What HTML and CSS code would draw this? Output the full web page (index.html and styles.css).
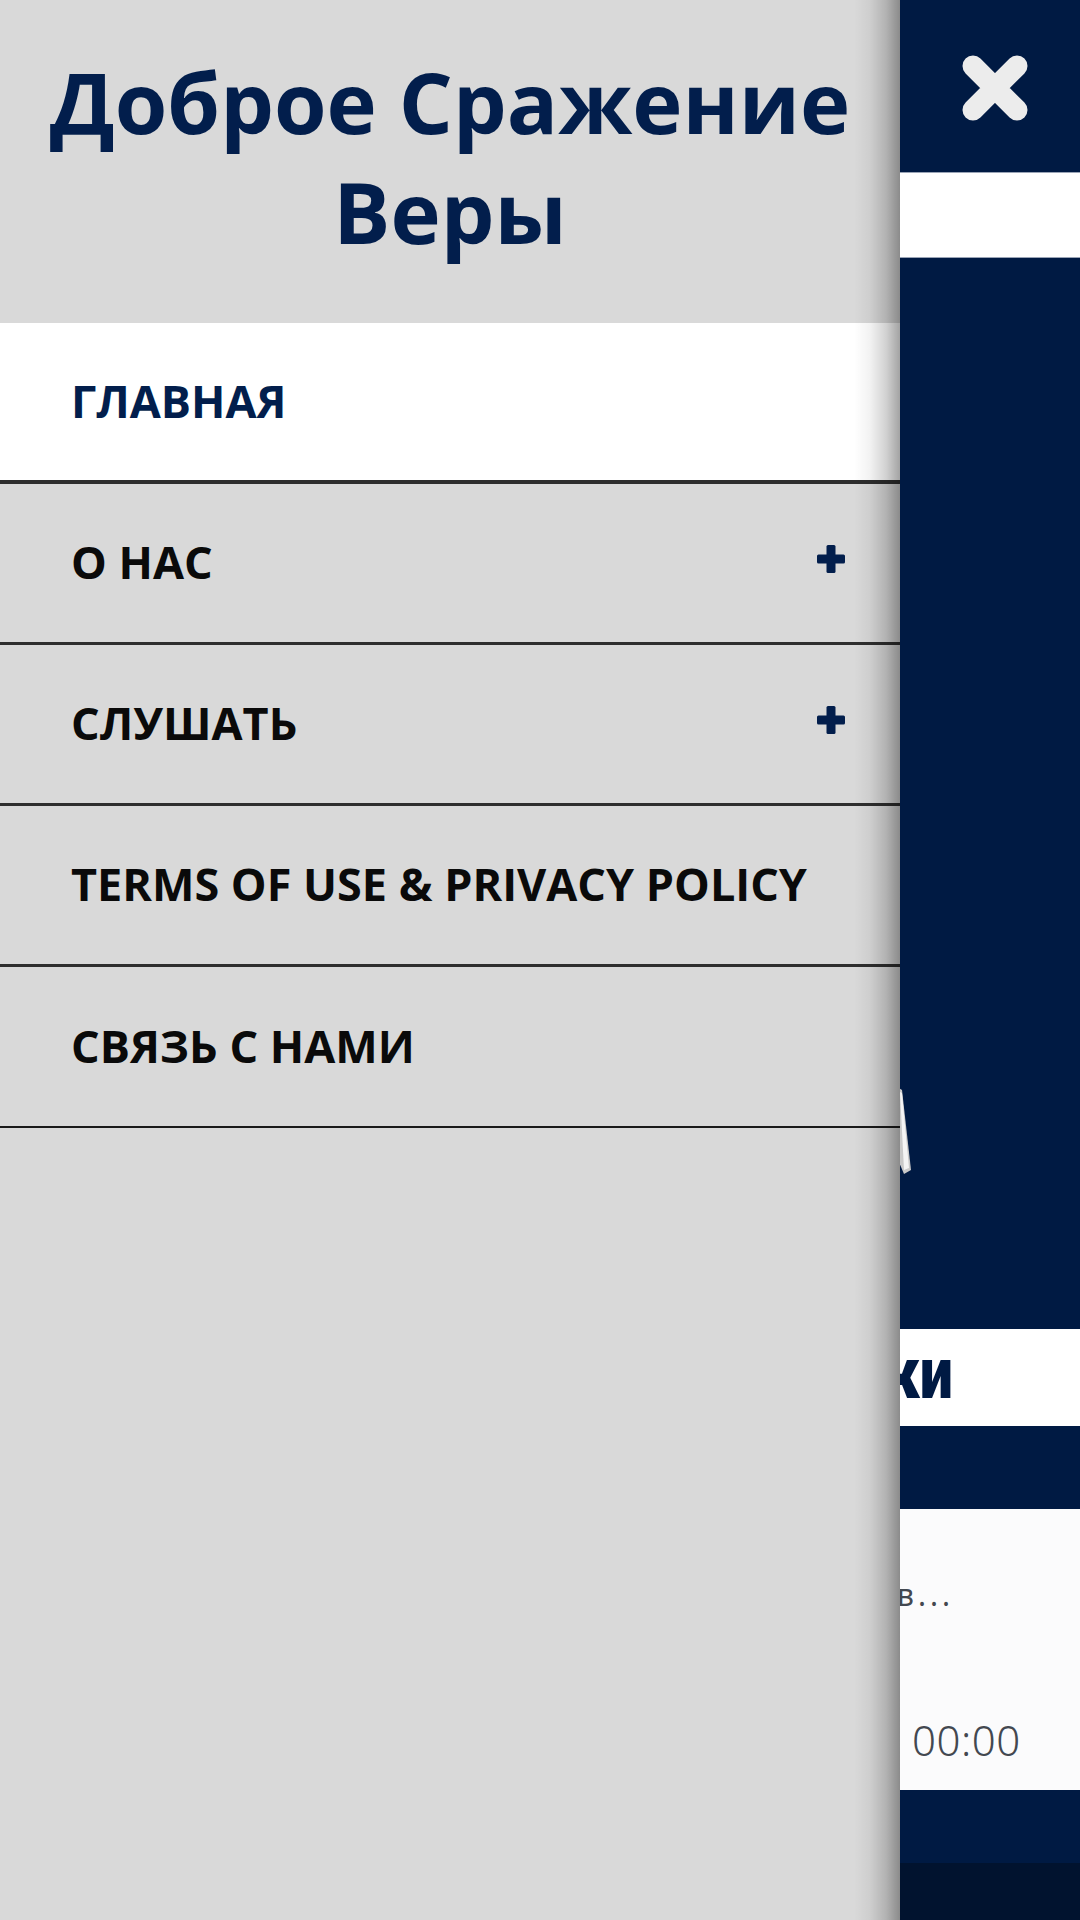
FILE: index.html
```html
<!DOCTYPE html>
<html lang="ru">
<head>
<meta charset="utf-8">
<title>Доброе Сражение Веры</title>
<link rel="stylesheet" href="styles.css">
</head>
<body>
<div class="screen">
  <nav class="drawer">
    <header class="drawer-head">
      <h1 class="site-title">Доброе Сражение<br>Веры</h1>
    </header>
    <ul class="menu">
      <li class="menu-item active"><span>ГЛАВНАЯ</span></li>
      <li class="menu-item"><span>О НАС</span>
        <svg class="plus" viewBox="0 0 30 30" width="30" height="30"><rect x="10.5" y="1" width="9" height="28" rx="1.5"/><rect x="1" y="10.5" width="28" height="9" rx="1.5"/></svg>
      </li>
      <li class="menu-item"><span>СЛУШАТЬ</span>
        <svg class="plus" viewBox="0 0 30 30" width="30" height="30"><rect x="10.5" y="1" width="9" height="28" rx="1.5"/><rect x="1" y="10.5" width="28" height="9" rx="1.5"/></svg>
      </li>
      <li class="menu-item"><span>TERMS OF USE &amp; PRIVACY POLICY</span></li>
      <li class="menu-item last"><span>СВЯЗЬ С НАМИ</span></li>
    </ul>
    <div class="drawer-shade"></div>
  </nav>
  <main class="page">
    <div class="page-top">
      <svg class="close" viewBox="0 0 66 66" width="66" height="66"><path d="M11 11 L55 55 M55 11 L11 55" stroke="#ececec" stroke-width="21" stroke-linecap="round"/></svg>
    </div>
    <div class="page-search"></div>
    <div class="page-hero">
      <svg class="sliver" viewBox="0 0 14 96" width="14" height="96"><polygon points="0,4 3,6 12,86 5,90 0,78" fill="#c9c9c9"/><polygon points="1,8 3,9 10,84 5,86" fill="#f4f4f4"/></svg>
    </div>
    <div class="page-band"><span class="band-text">ки</span></div>
    <div class="page-gap"></div>
    <div class="player">
      <div class="player-title">в...</div>
      <div class="player-time">00:00</div>
    </div>
    <div class="page-foot"></div>
    <div class="page-bottom"></div>
  </main>
</div>
</body>
</html>
```
FILE: styles.css
```css
* { box-sizing: border-box; }
html, body { margin: 0; padding: 0; }
body {
  width: 1080px;
  height: 1920px;
  overflow: hidden;
  font-family: "Open Sans", "Noto Sans", sans-serif;
  background: #d9d9d9;
}
.screen {
  display: flex;
  width: 1080px;
  height: 1920px;
}
.drawer {
  position: relative;
  width: 900px;
  flex: 0 0 900px;
  background: #d9d9d9;
}
.drawer-head {
  height: 323px;
  padding-top: 46px;
  text-align: center;
}
.site-title {
  margin: 0;
  font-size: 85px;
  line-height: 110px;
  font-weight: 700;
  color: #021e4c;
  letter-spacing: 0;
}
.menu {
  list-style: none;
  margin: 0;
  padding: 0;
}
.menu-item {
  display: flex;
  align-items: center;
  justify-content: space-between;
  height: 161px;
  padding: 0 54px 3px 71px;
  border-bottom: 3px solid #2e2e2e;
  font-size: 45px;
  font-weight: 700;
  color: #0a0a0a;
}
.menu-item.active {
  background: #ffffff;
  color: #021e4c;
  border-bottom-width: 4px;
}
.menu-item.last {
  border-bottom: 2px solid #1a1a1a;
}
.plus {
  fill: #021e4c;
  flex: 0 0 auto;
  margin-top: -6px;
}
.drawer-shade {
  position: absolute;
  top: 0;
  right: 0;
  width: 46px;
  height: 100%;
  background: linear-gradient(to right, rgba(0,0,0,0) 0%, rgba(0,0,0,0.05) 35%, rgba(0,0,0,0.18) 70%, rgba(0,0,0,0.36) 100%);
  pointer-events: none;
}
.page {
  flex: 0 0 180px;
  width: 180px;
  overflow: hidden;
  display: flex;
  flex-direction: column;
  background: #001a43;
}
.page-top {
  height: 172px;
  display: flex;
  align-items: center;
  justify-content: center;
  padding-left: 10px;
  padding-top: 4px;
  background: #001a43;
}
.page-search {
  height: 86px;
  background: #ffffff;
  border-top: 1px solid #9aa4b6;
  border-bottom: 1px solid #9aa4b6;
}
.page-hero {
  height: 1071px;
  background: #001a43;
  position: relative;
}
.sliver {
  position: absolute;
  left: -1px;
  top: 826px;
}
.page-band {
  height: 97px;
  background: #ffffff;
  display: flex;
  align-items: center;
  overflow: hidden;
}
.band-text {
  display: inline-block;
  margin-left: -14px;
  font-family: Roboto, "Open Sans", sans-serif;
  font-weight: 900;
  font-size: 72px;
  line-height: 1;
  color: #001a43;
  padding-bottom: 8px;
  white-space: nowrap;
  transform: scaleX(0.82);
  transform-origin: left center;
}
.page-gap {
  height: 83px;
  background: #001a43;
}
.player {
  height: 281px;
  background: #fbfbfc;
  display: flex;
  flex-direction: column;
  overflow: hidden;
  color: #434850;
  font-family: "Noto Sans", "Open Sans", sans-serif;
}
.player-title {
  margin-top: 66px;
  margin-left: -3px;
  font-size: 30px;
  line-height: 40px;
  letter-spacing: 4px;
  white-space: nowrap;
}
.player-time {
  margin-top: 100px;
  margin-left: 12px;
  font-size: 42px;
  font-weight: 300;
  line-height: 50px;
  letter-spacing: 0.5px;
  white-space: nowrap;
}
.page-foot {
  height: 73px;
  background: #001a43;
}
.page-bottom {
  flex: 1;
  background: #01132f;
}
```
